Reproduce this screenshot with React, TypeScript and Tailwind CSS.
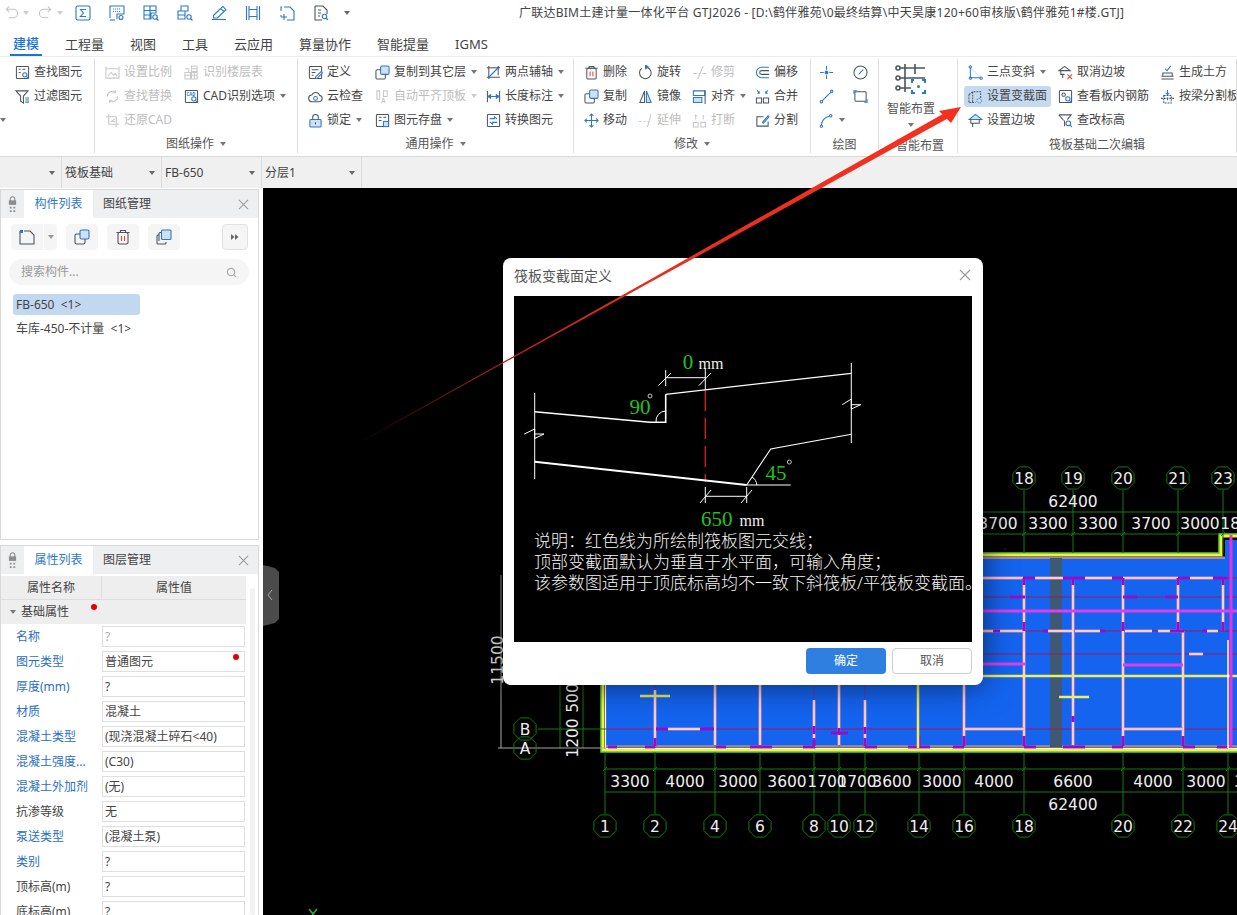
import type { ReactNode } from "react";

/* ── icons ── */
const BLUE = "#2b78c5";
const LIGHT = "#cfe0f5";
const RED = "#d9453a";

const icons: Record<string, ReactNode> = {
  find: (<><rect x="1.5" y="1.5" width="13" height="13" rx="1" /><path d="M4 4.5h2M8 4.5h3M4 8h2" /><circle cx="10.5" cy="10.5" r="2.3" stroke={BLUE} /><path d="M12.2 12.2l2.3 2.3" stroke={BLUE} /></>),
  filter: (<><path d="M1 2h13L9 7.5V15L6 13V7.5z" /><path d="M11 9.5h4M11 11.8h4M11 14h4" stroke={BLUE} /></>),
  scale: (<><path d="M1 4h14v10H1z" /><path d="M1 1.5v2M15 1.5v2M3 12l3.5-4 2.5 3 2-2 2 3" /></>),
  replace: (<><path d="M2.5 8a5.5 5.5 0 0 1 8.5-4.6M13.5 8A5.5 5.5 0 0 1 5 12.6" /><path d="M11 1v3H8M5 15v-3h3" /></>),
  restore: (<><path d="M4 1v11h11M1 4h11v11" /><path d="M11 6L7 9l4 0" /></>),
  layers: (<><path d="M8 1h6v6H8zM1 8h6v7H1zM8 8h6v7H8zM1 4h4v4" /><path d="M8 4h6M11 8v7M1 11h13" /></>),
  cad: (<><rect x="1.5" y="1.5" width="13" height="13" rx="1" /><text x="2.6" y="7" fontSize="4.6" fontWeight="700" fill={BLUE} stroke="none">CAD</text><circle cx="10.5" cy="10.5" r="2.3" stroke={BLUE} /><path d="M12.2 12.2l2.3 2.3" stroke={BLUE} /></>),
  define: (<><rect x="1.5" y="1.5" width="13" height="13" rx="1" /><path d="M4 5h7M4 8h4M4 11h2" /><path d="M8 13l6-6 1.5 1.5-6 6H8z" stroke={BLUE} fill="white" /></>),
  cloud: (<><path d="M4.5 13.5a3.5 3.5 0 0 1-.5-7 4.5 4.5 0 0 1 8.5.3 3.4 3.4 0 0 1-.5 6.7z" /><circle cx="8" cy="10" r="2" stroke={BLUE} /></>),
  lock: (<><path d="M5 7V4.5a3 3 0 0 1 6 0V7" /><rect x="2" y="7" width="12" height="8" rx="1" fill={LIGHT} stroke={BLUE} /><path d="M8 10v2" stroke="#444" /></>),
  copy: (<><rect x="6" y="1" width="9" height="9" rx="1.5" fill={LIGHT} stroke={BLUE} /><path d="M6 5H2.5A1.5 1.5 0 0 0 1 6.500V13.500A1.500 1.500 0 0 0 2.500 15H9.500A1.500 1.500 0 0 0 11 13.500V10" /></>),
  align2: (<><path d="M2 2h3v9H2zM9 2h4v6H9z" /><path d="M7 15l2-5 2 5M8 13.500h2" /></>),
  save: (<><rect x="1.500" y="1.500" width="13" height="13" rx="1" /><path d="M4 4.500h3M9 4.500h3M4 8h3" /><rect x="9" y="9" width="5.500" height="5.500" fill={LIGHT} stroke={BLUE} /></>),
  axis: (<><path d="M3 1v14M1 13h14M13 1v10" /><path d="M2 14L14 2" stroke={BLUE} strokeWidth="1.500" /><path d="M1 3h14" /></>),
  dim: (<><path d="M1.500 2v12M14.500 2v12" /><path d="M2 8h12M2 8l3-2v4zM14 8l-3-2v4z" stroke={BLUE} /></>),
  convert: (<><rect x="1.500" y="1.500" width="13" height="13" rx="1" /><path d="M4 6h5V4l3 2.500M12 10H7v2l-3-2.500" stroke={BLUE} /></>),
  del: (<><path d="M1.500 3.500h13M5.500 3.500V1.500h5v2" /><rect x="3" y="3.500" width="10" height="11.500" rx="1.500" /><path d="M6.500 7v5M9.500 7v5" stroke={RED} /></>),
  rotate: (<><path d="M9 2.300A6.200 6.200 0 1 1 4 3.500" /><path d="M8 0v4l3-2z" fill={BLUE} stroke={BLUE} /></>),
  trim: <path d="M1 9h4M7 9h2M11 9h4M12 1l-6 14" />,
  offset: (<><path d="M15 2.500H7a5.500 5.500 0 0 0 0 11h8" stroke={BLUE} /><path d="M15 6H7a2 2 0 0 0 0 4h8" /></>),
  mirror: (<><path d="M7 2L2 14.500h5z" /><path d="M9 2l5 12.500H9z" fill={LIGHT} stroke={BLUE} /></>),
  align: (<><path d="M1.500 2h12v5h-12z" stroke={BLUE} /><path d="M1.500 9h9v5.500h-9z" fill={LIGHT} stroke={BLUE} /><path d="M14 1v15" /></>),
  merge: (<><path d="M1.500 9.500h5.500v5.500H1.500zM9 9.500h5.500v5.500H9z" /><path d="M2.500 1.500l2 3M4.500 2.500v2h-2M13.500 1.500l-2 3M11.500 2.500v2h2" stroke={BLUE} /></>),
  move: <path stroke={BLUE} d="M8 1v14M1 8h14M6 3l2-2 2 2M6 13l2 2 2-2M3 6L1 8l2 2M13 6l2 2-2 2" />,
  extend: <path d="M1 9h3M6 9h2M10 9h2M14 1L10 15" />,
  breakIt: (<><path d="M1.500 10h5v5h-5zM9.500 10h5v5h-5zM4 2v5M12 2v5M3 3l1-1 1 1" /></>),
  split: (<><path d="M9 4H2v10h12V9" /><path d="M8 10l6-7 1 1-6 7z" stroke={BLUE} /></>),
  point: (<><path d="M8 1v4M8 11v4M1 8h4M11 8h4" stroke={BLUE} /><circle cx="8" cy="8" r="1.500" fill={BLUE} stroke={BLUE} /></>),
  gauge: (<><circle cx="8" cy="8" r="7" /><path d="M6 10l5-5" stroke={BLUE} /></>),
  line: (<><path d="M3 13L13 3" stroke={BLUE} /><circle cx="2.500" cy="13.500" r="1.300" stroke={BLUE} /><circle cx="13.500" cy="2.500" r="1.300" stroke={BLUE} /></>),
  rect: (<><rect x="2" y="3" width="12" height="10" rx="1" /><path d="M1 5V2h3M12 14h3v-3" stroke={BLUE} /></>),
  arc: (<><path d="M2.500 13A10 10 0 0 1 11 3.500" stroke={BLUE} /><circle cx="2.500" cy="14" r="1.300" stroke={BLUE} /><circle cx="12.500" cy="3" r="1.300" stroke={BLUE} /></>),
  three: (<><path d="M2.500 3v10.500H13" stroke={BLUE} /><path d="M3 3l10 10" stroke="#d5e4f5" /><circle cx="2.500" cy="2" r="1.200" stroke={BLUE} /><circle cx="2.500" cy="14" r="1.200" stroke={BLUE} /><circle cx="14" cy="14" r="1.200" stroke={BLUE} /></>),
  section: (<><path d="M1 6l4-3h8.500v7.500M1 6v8.500h7M5 3v11" strokeDasharray="2 1" /><circle cx="12" cy="12.500" r="2.500" stroke={BLUE} strokeDasharray="1 1" /></>),
  slope: (<><path d="M1 7l7-5.500L15 7z" fill={LIGHT} stroke={BLUE} /><path d="M3 7v4h9V7M5 11v4" /></>),
  cancel: (<><path d="M1 6l6-4.500L13 6z" /><path d="M3 6v4h4M5 10v4" /><path d="M10 10l5 5M15 10l-5 5" stroke={RED} /></>),
  rebar: (<><rect x="1.500" y="1.500" width="13" height="13" rx="1" /><circle cx="6" cy="6" r="1.800" /><circle cx="10.500" cy="10.500" r="2.300" stroke={BLUE} /><path d="M12.200 12.200l2.300 2.300" stroke={BLUE} /></>),
  elev: (<><path d="M1 2h13l-4 5M7 8v6M1 2l5 6" /><circle cx="11" cy="11" r="2.500" stroke={BLUE} /><path d="M13 13l2 2" stroke={BLUE} /></>),
  earth: (<><path d="M1.500 12h13M3 12V8.500h10V12M1.500 15h13" /><path d="M5.500 4l2 2 4-5" stroke={BLUE} /></>),
  cut: (<><path d="M1 10h14M4 7h8v8H4z" strokeDasharray="2 1" /><path d="M8 1v5M6 4l2 2 2-2M8 9v3" stroke={BLUE} /></>),
  sum: (<><rect x="1" y="1" width="14" height="14" rx="1.500" stroke={BLUE} /><path d="M11 4.500H5.500L8.500 8l-3 3.500H11" stroke={BLUE} /></>),
  gridKey: (<><path d="M1 13V1h14v8H8v5" stroke={BLUE} /><path d="M4 4h8M4 6.500h8" stroke={BLUE} strokeDasharray="1 1" /><circle cx="12" cy="12.500" r="2" stroke={BLUE} /><path d="M1 15h5" stroke={BLUE} /></>),
  gridFind: (<><path d="M1 1h12v7H8v6H1zM1 5.500h12M7 1v13M1 10h6" stroke={BLUE} /><circle cx="12" cy="12" r="2.200" stroke={BLUE} /><path d="M13.500 13.500l2 2" stroke={BLUE} /></>),
  gridDash: (<><path d="M4 1h7v5H8v8H1V6h3zM1 10h7M4 1v5h4" stroke={BLUE} /><circle cx="12" cy="12" r="2.200" stroke={BLUE} /><path d="M13.500 13.500l2 2" stroke={BLUE} /></>),
  pen: (<><path d="M1 14.500h14" stroke={BLUE} /><path d="M2.500 10.500l7-7 3.500 3-6.500 6.500H2.500z" stroke={BLUE} /><path d="M10 3l2-1.500L15 5l-2 1.500" stroke={BLUE} /></>),
  film: <path stroke={BLUE} d="M1.500 1v14M14.500 1v14M4 1v14M12 1v14M4 4.500h8M4 11.500h8" />,
  region: (<><path d="M5 2h6l4 4v9H8M2 6V2h1M2 10v2" stroke={BLUE} /><path d="M5 9v6M2 12h6" stroke={BLUE} /></>),
  reportFind: (<><path d="M2 1h8l4 4v4M2 1v14h7" /><path d="M5 5h3M5 8h3M5 11h2" /><circle cx="11.500" cy="11.500" r="2.200" stroke={BLUE} /><path d="M13 13l2 2" stroke={BLUE} /></>),
  newDoc: (<><path d="M5 2h6l4 4v9H1V2" /><path d="M1 1h3v3H1z" fill={BLUE} stroke="none" /></>),
  stack: (<><rect x="5.500" y="1" width="9.500" height="9.500" rx="1" fill={LIGHT} stroke={BLUE} /><path d="M5.500 3.500H4A1 1 0 0 0 3 4.500V12M3 6H2A1 1 0 0 0 1 7v7a1 1 0 0 0 1 1h7a1 1 0 0 0 1-1v-1" /></>),
  undo: <path d="M3 5.500h7a4.500 4.500 0 0 1 0 9H5M5.500 2.500L2.500 5.500l3 3" transform="translate(0 -1)" />,
  redo: <path d="M13 5.500H6a4.500 4.500 0 0 0 0 9h5M10.500 2.500l3 3-3 3" transform="translate(0 -1)" />,
};

function Ico({ name, tone = "text-[#4a5560]", size = "w-[15px] h-[15px]" }: { name: string; tone?: string; size?: string }) {
  return (
    <svg viewBox="0 0 16 16" fill="none" stroke="currentColor" strokeWidth={1.1} className={`${size} ${tone} shrink-0`} aria-hidden>
      {icons[name]}
    </svg>
  );
}

function Caret({ tone = "border-t-[#777]" }: { tone?: string }) {
  return <span className={`inline-block shrink-0 w-0 h-0 border-x-[3px] border-x-transparent border-t-[4px] ${tone}`} />;
}

function CloseX({ tone = "text-[#9a9a9a]", size = "w-[11px] h-[11px]" }: { tone?: string; size?: string }) {
  return (
    <svg viewBox="0 0 12 12" fill="none" stroke="currentColor" strokeWidth={1.1} className={`${size} ${tone}`} aria-hidden>
      <path d="M1 1l10 10M11 1L1 11" />
    </svg>
  );
}

/* ── ribbon data ── */
type Item = { label?: string; icon: string; off?: boolean; caret?: boolean; active?: boolean };
type Column = { width: string; items: Item[] };
type Group = { width: string; pad: string; title?: string; titleCaret?: boolean; titleNudge?: boolean; columns: Column[] };

const groups: Group[] = [
  {
    width: "w-[95px]",
    pad: "pl-[15px]",
    columns: [{ width: "w-[79px]", items: [{ label: "查找图元", icon: "find" }, { label: "过滤图元", icon: "filter" }] }],
  },
  {
    width: "w-[203px]",
    pad: "pl-[10px]",
    title: "图纸操作",
    titleCaret: true,
    columns: [
      { width: "w-[79px]", items: [{ label: "设置比例", icon: "scale", off: true }, { label: "查找替换", icon: "replace", off: true }, { label: "还原CAD", icon: "restore", off: true }] },
      { width: "w-[110px]", items: [{ label: "识别楼层表", icon: "layers", off: true }, { label: "CAD识别选项", icon: "cad", caret: true }] },
    ],
  },
  {
    width: "w-[276px]",
    pad: "pl-[10px]",
    title: "通用操作",
    titleCaret: true,
    columns: [
      { width: "w-[67px]", items: [{ label: "定义", icon: "define" }, { label: "云检查", icon: "cloud" }, { label: "锁定", icon: "lock", caret: true }] },
      { width: "w-[111px]", items: [{ label: "复制到其它层", icon: "copy", caret: true }, { label: "自动平齐顶板", icon: "align2", off: true, caret: true }, { label: "图元存盘", icon: "save", caret: true }] },
      { width: "w-[85px]", items: [{ label: "两点辅轴", icon: "axis", caret: true }, { label: "长度标注", icon: "dim", caret: true }, { label: "转换图元", icon: "convert" }] },
    ],
  },
  {
    width: "w-[237px]",
    pad: "pl-[10px]",
    title: "修改",
    titleCaret: true,
    columns: [
      { width: "w-[54px]", items: [{ label: "删除", icon: "del" }, { label: "复制", icon: "copy" }, { label: "移动", icon: "move" }] },
      { width: "w-[54px]", items: [{ label: "旋转", icon: "rotate" }, { label: "镜像", icon: "mirror" }, { label: "延伸", icon: "extend", off: true }] },
      { width: "w-[63px]", items: [{ label: "修剪", icon: "trim", off: true }, { label: "对齐", icon: "align", caret: true }, { label: "打断", icon: "breakIt", off: true }] },
      { width: "w-[54px]", items: [{ label: "偏移", icon: "offset" }, { label: "合并", icon: "merge" }, { label: "分割", icon: "split" }] },
    ],
  },
  {
    width: "w-[68px]",
    pad: "pl-[8px]",
    title: "绘图",
    titleNudge: true,
    columns: [
      { width: "w-[34px]", items: [{ icon: "point" }, { icon: "line" }, { icon: "arc", caret: true }] },
      { width: "w-[24px]", items: [{ icon: "gauge" }, { icon: "rect" }] },
    ],
  },
];

const slabGroup: Group = {
  width: "w-[279px]",
  pad: "pl-[10px]",
  title: "筏板基础二次编辑",
  titleNudge: true,
  columns: [
    { width: "w-[90px]", items: [{ label: "三点变斜", icon: "three", caret: true }, { label: "设置变截面", icon: "section", active: true }, { label: "设置边坡", icon: "slope" }] },
    { width: "w-[102px]", items: [{ label: "取消边坡", icon: "cancel" }, { label: "查看板内钢筋", icon: "rebar" }, { label: "查改标高", icon: "elev" }] },
    { width: "w-[90px]", items: [{ label: "生成土方", icon: "earth" }, { label: "按梁分割板", icon: "cut" }] },
  ],
};

function RibbonItem({ item }: { item: Item }) {
  const color = item.off ? "text-[#bdbdbd]" : "text-[#444]";
  return (
    <div className="h-6 flex items-center">
      <div className={`flex items-center gap-1 whitespace-nowrap h-[21px] ${item.active ? "bg-[#c5daf0] rounded-[3px] -mx-1 px-1" : ""}`}>
        <Ico name={item.icon} tone={item.off ? "text-[#c8c8c8]" : "text-[#4a5560]"} />
        {item.label && <span className={`text-xs leading-none ${color}`}>{item.label}</span>}
        {item.caret && <span className="ml-[1px] flex"><Caret tone={item.off ? "border-t-[#ccc]" : "border-t-[#777]"} /></span>}
      </div>
    </div>
  );
}

function GroupTitle({ group }: { group: Group }) {
  return (
    <div className={`h-[26px] shrink-0 flex items-center justify-center gap-[6px] text-xs text-[#555] ${group.titleNudge ? "pt-[2px]" : ""}`}>
      <span>{group.title}</span>
      {group.titleCaret && <Caret />}
    </div>
  );
}

function RibbonGroup({ group }: { group: Group }) {
  return (
    <div className={`${group.width} shrink-0 h-[94px] my-[2px] border-r border-[#dedede] flex flex-col overflow-hidden`}>
      <div className={`flex h-[72px] shrink-0 pt-px ${group.pad}`}>
        {group.columns.map((col, i) => (
          <div key={i} className={`${col.width} shrink-0`}>
            {col.items.map((item, j) => (
              <RibbonItem key={j} item={item} />
            ))}
          </div>
        ))}
      </div>
      {group.title && <GroupTitle group={group} />}
    </div>
  );
}

/* ── side panels ── */
const quickIcons = ["sum", "gridKey", "gridFind", "gridDash", "pen", "film", "region", "reportFind"];
const tabs = ["建模", "工程量", "视图", "工具", "云应用", "算量协作", "智能提量", "IGMS"];
const pickers = [
  { label: "", width: "w-[62px]" },
  { label: "筏板基础", width: "w-[100px]" },
  { label: "FB-650", width: "w-[100px]" },
  { label: "分层1", width: "w-[100px]" },
];

const props: { name: string; value: string; blue?: boolean; dot?: boolean; faint?: boolean }[] = [
  { name: "名称", value: "?", blue: true, faint: true },
  { name: "图元类型", value: "普通图元", blue: true, dot: true },
  { name: "厚度(mm)", value: "?", blue: true },
  { name: "材质", value: "混凝土", blue: true },
  { name: "混凝土类型", value: "(现浇混凝土碎石<40)", blue: true },
  { name: "混凝土强度...", value: "(C30)", blue: true },
  { name: "混凝土外加剂", value: "(无)", blue: true },
  { name: "抗渗等级", value: "无" },
  { name: "泵送类型", value: "(混凝土泵)", blue: true },
  { name: "类别", value: "?", blue: true },
  { name: "顶标高(m)", value: "?" },
  { name: "底标高(m)", value: "?" },
];

function PanelHeader({ active, other }: { active: string; other: string }) {
  return (
    <div className="h-[28px] shrink-0 bg-[#eeeff1] flex items-stretch text-xs">
      <div className="w-[23px] flex flex-col items-center justify-center gap-px">
        <svg viewBox="0 0 10 18" className="w-[9px] h-[18px]" aria-hidden>
          <path d="M2.500 6V3.500a2.500 2.500 0 0 1 5 0V6" fill="none" stroke="#8c8c8c" strokeWidth="1.200" />
          <rect x="1" y="5" width="8" height="5" fill="#8c8c8c" />
          <path d="M2 12h2v2H2zM6 12h2v2H6zM2 16h2v2H2zM6 16h2v2H6z" fill="#8c8c8c" />
        </svg>
      </div>
      <div className="w-[69px] bg-white text-[#2b78c5] flex items-center justify-center">{active}</div>
      <div className="ml-[10px] text-[#444] flex items-center">{other}</div>
      <div className="ml-auto mr-[9px] flex items-center">
        <CloseX />
      </div>
    </div>
  );
}

function ComponentPanel() {
  return (
    <section className="h-[351px] w-[259px] shrink-0 border-x border-y border-[#d9d9d9] flex flex-col overflow-hidden">
      <PanelHeader active="构件列表" other="图纸管理" />
      <div className="flex items-center h-[26px] mt-[6px] ml-[10px]">
        <div className="flex">
          <div className="w-[32px] h-[26px] bg-[#f5f5f5] rounded-l-[4px] flex items-center justify-center">
            <Ico name="newDoc" size="w-[16px] h-[16px]" />
          </div>
          <div className="w-[13px] ml-px h-[26px] bg-[#f5f5f5] rounded-r-[4px] flex items-center justify-center">
            <Caret tone="border-t-[#999]" />
          </div>
        </div>
        {["copy", "del", "stack"].map((n, i) => (
          <div key={i} className="w-[32px] h-[26px] ml-[9px] bg-[#f5f5f5] rounded-[4px] flex items-center justify-center">
            <Ico name={n} size="w-[16px] h-[16px]" />
          </div>
        ))}
        <div className="w-[26px] h-[26px] ml-[42px] bg-[#f5f5f5] border border-[#e2e2e2] rounded-[4px] flex items-center justify-center text-[#666]">
          <svg viewBox="0 0 8 6" className="w-[8px] h-[6px]" fill="currentColor" aria-hidden><path d="M0 0l3.500 3L0 6zM4 0l3.500 3L4 6z" /></svg>
        </div>
      </div>
      <div className="mt-[9px] ml-[8px] mr-[9px] h-[26px] rounded-full bg-[#f5f5f5] flex items-center px-3 text-xs text-[#9a9a9a]">
        <span>搜索构件...</span>
        <svg viewBox="0 0 12 12" className="w-[11px] h-[11px] ml-auto" fill="none" stroke="#a8a8a8" strokeWidth="1.200" aria-hidden>
          <circle cx="5.500" cy="5.500" r="4" /><path d="M8.500 8.500l2.500 2.500" />
        </svg>
      </div>
      <div className="mt-[9px] ml-[12px] text-xs text-[#444]">
        <div className="w-[127px] h-[21px] bg-[#c2d8f0] rounded-[3px] flex items-center pl-[3px]">FB-650&nbsp; &lt;1&gt;</div>
        <div className="h-[24px] mt-[2px] flex items-center pl-[3px]">车库-450-不计量&nbsp; &lt;1&gt;</div>
      </div>
    </section>
  );
}

function PropertyPanel() {
  return (
    <section className="mt-[5px] flex-1 min-h-0 w-[259px] border-x border-t border-[#d9d9d9] flex flex-col overflow-hidden relative">
      <PanelHeader active="属性列表" other="图层管理" />
      <div className="absolute right-[3px] top-[42px] bottom-0 w-[5px] bg-[#f3f3f3] rounded-full" />
      <div className="mt-[2px] w-[245px] text-xs">
        <div className="flex h-[24px] bg-[#eeeeee] text-[#444] border-b border-[#ddd]">
          <div className="w-[101px] border-r border-[#ddd] flex items-center justify-center">属性名称</div>
          <div className="flex-1 flex items-center justify-center">属性值</div>
        </div>
        <div className="relative h-[24px] bg-[#eeeeee] flex items-center text-[#444]">
          <span className="ml-[9px] mr-[5px] flex"><Caret /></span>
          <span>基础属性</span>
          <span className="absolute left-[90px] top-[4px] w-[6px] h-[6px] rounded-full bg-[#e30000]" />
        </div>
        <div>
          {props.map((p) => (
            <div key={p.name} className="flex h-[25px] items-center">
              <div className={`w-[101px] pl-[15px] whitespace-nowrap ${p.blue ? "text-[#2b6fc0]" : "text-[#444]"}`}>{p.name}</div>
              <div className={`relative w-[143px] h-[21px] border border-[#dfdfdf] flex items-center pl-[2px] ${p.faint ? "text-[#aaa]" : "text-[#444]"}`}>
                {p.value}
                {p.dot && <span className="absolute right-[5px] top-[2px] w-[6px] h-[6px] rounded-full bg-[#e30000]" />}
              </div>
            </div>
          ))}
        </div>
      </div>
    </section>
  );
}

/* ── CAD drawing ── */
const cadFont = "'DejaVu Sans', sans-serif";
const axisGreen = "#127a12";
const darkRed = "#a3175a";
const purple = "#9010c8";
const magenta = "#e03cf0";

const topBubbles: [string, number][] = [["18", 1024], ["19", 1073], ["20", 1123], ["21", 1178], ["23", 1223]];
const bottomBubbles: [string, number][] = [
  ["1", 605], ["2", 655], ["4", 715], ["6", 760], ["8", 814], ["10", 839], ["12", 865],
  ["14", 919], ["16", 964], ["18", 1024], ["20", 1123], ["22", 1183], ["24", 1228],
];
const topDims: [string, number][] = [["3700", 998], ["3300", 1048], ["3300", 1098], ["3700", 1151], ["3000", 1200], ["1800", 1240]];
const bottomDims: [string, number][] = [
  ["3300", 630], ["4000", 685], ["3000", 738], ["3600", 787], ["1700", 827], ["1700", 857], ["3600", 892],
  ["3000", 942], ["4000", 994], ["6600", 1073], ["4000", 1153], ["3000", 1206], ["3300", 1254],
];

// white members with a pink edge: [x1, y1, x2, y2]
const members: number[][] = [
  [655, 690, 655, 745], [715, 685, 715, 745], [760, 685, 760, 745], [814, 700, 814, 740], [839, 685, 839, 745], [865, 700, 865, 745],
  [964, 685, 964, 745], [1024, 578, 1024, 745], [1073, 578, 1073, 745], [1123, 578, 1123, 745], [1178, 578, 1178, 631],
  [1183, 631, 1183, 745], [1223, 578, 1223, 631],
  [668, 729, 700, 729], [965, 729, 1024, 729], [1124, 729, 1183, 729],
  [983, 578, 1023, 578], [1035, 578, 1063, 578], [1085, 578, 1112, 578], [1123, 578, 1178, 578], [1190, 578, 1213, 578],
  [983, 631, 1024, 631], [1048, 631, 1072, 631], [1075, 631, 1100, 631], [1125, 631, 1152, 631], [1158, 631, 1183, 631], [1207, 631, 1218, 631],
  [1189, 654, 1203, 654],
];

// purple rebar blocks: [x1, y1, x2, y2]
const blocks: number[][] = [
  [608, 747, 617, 747], [645, 747, 655, 747], [716, 747, 726, 747], [750, 747, 772, 747], [803, 747, 815, 747], [865, 747, 877, 747],
  [908, 747, 930, 747], [953, 747, 964, 747], [1024, 747, 1036, 747], [1063, 747, 1085, 747], [1112, 747, 1123, 747], [1183, 747, 1195, 747], [1217, 747, 1228, 747],
  [656, 729, 668, 729], [700, 729, 714, 729], [831, 733, 848, 733],
  [1023, 578, 1035, 578], [1063, 578, 1085, 578], [1112, 578, 1123, 578], [1178, 578, 1190, 578], [1213, 578, 1227, 578],
  [1010, 597, 1025, 597], [1123, 597, 1137, 597], [1165, 597, 1178, 597],
  [993, 631, 1000, 631], [1043, 631, 1048, 631], [1100, 631, 1105, 631], [1170, 631, 1184, 631], [1202, 631, 1207, 631],
  [1024, 578, 1024, 585], [1073, 578, 1073, 585], [1123, 578, 1123, 585], [1178, 578, 1178, 585], [1223, 578, 1223, 585],
  [1024, 622, 1024, 631], [1123, 622, 1123, 631], [1178, 622, 1178, 631], [1223, 622, 1223, 631],
  [655, 738, 655, 746], [814, 726, 814, 734], [814, 738, 814, 746], [839, 728, 839, 735], [865, 727, 865, 734], [865, 738, 865, 746],
  [919, 736, 919, 746], [964, 736, 964, 746], [1024, 736, 1024, 746], [1073, 716, 1073, 722], [1123, 736, 1123, 746], [1183, 736, 1183, 746],
];

function octagon(cx: number, cy: number, r: number) {
  const pts: string[] = [];
  for (let i = 0; i < 8; i++) {
    const a = (Math.PI / 4) * i + Math.PI / 8;
    pts.push(`${cx + r * Math.cos(a)},${cy + r * Math.sin(a)}`);
  }
  return pts.join(" ");
}

function Bubble({ label, x, y }: { label: string; x: number; y: number }) {
  return (
    <g>
      <polygon points={octagon(x, y, 12)} fill="none" stroke={axisGreen} />
      <text x={x} y={y + 6} textAnchor="middle" fontSize="15.500" fill="#eee" fontFamily={cadFont}>{label}</text>
    </g>
  );
}

function DimText({ label, x, y }: { label: string; x: number; y: number }) {
  return <text x={x} y={y} textAnchor="middle" fontSize="15.500" fill="#eee" fontFamily={cadFont}>{label}</text>;
}

function CadDrawing() {
  return (
    <svg viewBox="263 188 974 727" className="absolute inset-0 w-full h-full" aria-hidden>
      {/* collapse handle */}
      <path d="M263 565l12 3 4 4v47l-4 4-12 3z" fill="#4b4b4b" />
      <path d="M272 590l-4 5 4 5" fill="none" stroke="#a8a8a8" />

      {/* slab fill and outline */}
      <path d="M606 558H1225V540H1237V746H606z" fill="#1464f0" />
      <path d="M601 685V752H1237M600 553H1219V534H1237" fill="none" stroke="#45d945" strokeWidth="1.500" />
      <path d="M603 685V750H1237M600 555H1221V536H1237" fill="none" stroke="#f2f23c" strokeWidth="3" />
      <path d="M605.500 685V748.500H1237" fill="none" stroke="#ffffff" strokeWidth="1.200" />
      <path d="M606 746.500H1237M983 557.800H1225" fill="none" stroke="#a58a94" strokeWidth="2.500" />
      <rect x="1050" y="558" width="12" height="189" fill="#3f5873" />

      {/* dark red grid */}
      {[578, 597, 631, 654, 729].map((y) => (
        <path key={y} d={`M606 ${y}H1237`} stroke={darkRed} strokeWidth="1" />
      ))}
      {[655, 715, 760, 814, 839, 865, 919, 964].map((x) => (
        <path key={x} d={`M${x} 685V747`} stroke={darkRed} strokeOpacity=".5" strokeWidth="1" />
      ))}

      {/* members */}
      {members.map((m, i) => (
        <g key={i}>
          <line x1={m[0]} y1={m[1]} x2={m[2]} y2={m[3]} stroke="#e58aa8" strokeWidth="3" />
          <line x1={m[0]} y1={m[1]} x2={m[2]} y2={m[3]} stroke="#ffffff" strokeWidth="1.200" />
        </g>
      ))}
      {blocks.map((m, i) => (
        <line key={i} x1={m[0]} y1={m[1]} x2={m[2]} y2={m[3]} stroke={purple} strokeWidth="3" />
      ))}
      <path d="M983 611H1237M983 664H1025M1123 665H1183" stroke={magenta} strokeWidth="3" />
      <path d="M983 676H1237M918 685V748M640 696H670M1059 697H1089" stroke="#eef058" strokeWidth="2.500" />
      <path d="M1228 640V748" stroke="#ffffff" strokeWidth="1.500" />
      <path d="M1231 535V748" stroke="#f02ce0" strokeWidth="3" />
      <circle cx="1005" cy="549" r="1.500" fill="#111" />

      {/* axes */}
      {topBubbles.map(([label, x]) => (
        <g key={label}>
          <path d={`M${x} 490V553`} stroke={axisGreen} />
          <Bubble label={label} x={x} y={478} />
        </g>
      ))}
      {bottomBubbles.map(([label, x]) => (
        <g key={label}>
          <path d={`M${x} 752V814`} stroke={axisGreen} />
          <Bubble label={label} x={x} y={826} />
          <path d={`M${x - 2} 771l4-4`} stroke={axisGreen} />
        </g>
      ))}
      <path d="M983 512H1237M983 534H1219M605 769H1237M605 792H1237" stroke={axisGreen} />
      {topBubbles.map(([label, x]) => (
        <path key={label} d={`M${x - 2} 536l4-4`} stroke={axisGreen} />
      ))}
      {topDims.map(([label, x], i) => <DimText key={i} label={label} x={x} y={529} />)}
      {bottomDims.map(([label, x], i) => <DimText key={i} label={label} x={x} y={787} />)}
      <DimText label="62400" x={1073} y={507} />
      <DimText label="62400" x={1073} y={810} />

      {/* left side dims */}
      <path d="M538 729H606M560 685V748M583 685V748" stroke={axisGreen} fill="none" />
      <path d="M501 575V748M498 748H606" stroke="#a8a8a8" fill="none" />
      <Bubble label="B" x={525} y={729} />
      <Bubble label="A" x={525} y={748} />
      <text transform="translate(578 738) rotate(-90)" textAnchor="middle" fontSize="15.500" fill="#eee" fontFamily={cadFont}>1200</text>
      <text transform="translate(578 698) rotate(-90)" textAnchor="middle" fontSize="15.500" fill="#eee" fontFamily={cadFont}>500</text>
      <text transform="translate(503 660) rotate(-90)" textAnchor="middle" fontSize="15.500" fill="#eee" fontFamily={cadFont}>11500</text>

      {/* origin mark */}
      <path d="M309 909l4 5 4-5M313 914v1" fill="none" stroke="#2fae2f" strokeWidth="1.600" />
    </svg>
  );
}

/* ── dialog ── */
const serif = "'Liberation Serif', serif";

function SectionDiagram() {
  return (
    <svg viewBox="514 296 458 234" className="block w-[458px] h-[234px]" fill="none" stroke="#ffffff" aria-hidden>
      <path d="M705.300 390V482" stroke="#c82020" strokeWidth="1.400" strokeDasharray="21 7" />
      <path d="M665.700 394.300L851.300 373.300" strokeWidth="1.300" />
      <path d="M534.700 411.700L650 422.300H665.700V394.300" strokeWidth="1.600" />
      <path d="M534.700 461.700L746.700 485" strokeWidth="1.900" />
      <path d="M746.700 485L770.700 449L851.300 434.300" strokeWidth="1.100" />
      <path d="M746.700 485H790.700" strokeWidth="1" />
      <path d="M534.700 393V479M851.300 363V443" strokeWidth="1" />
      <path d="M524.300 434L534.700 429V438.500L544 434H534.700" strokeWidth="1" />
      <path d="M842.300 404.700L851.300 399V409L860.700 404.700H851.300" strokeWidth="1" />
      <path d="M665.700 377.700H705.300M665.700 370V386M705.300 368V390M658.500 385.500L671 373M699 385.500L711 373" strokeWidth="1" />
      <path d="M705.300 496.300H746.700M705.300 487V503M746.700 487V503M700 503L711 490M741 503L752 490" strokeWidth="1" />
      <path d="M656 422a10 10 0 0 1 9.700-11M756.800 485a10 10 0 0 0-4.800-8" strokeWidth="1" />
      <circle cx="650" cy="396" r="2" stroke="#c8c8c8" strokeWidth="1" />
      <circle cx="789.300" cy="462" r="2" stroke="#c8c8c8" strokeWidth="1" />
      <g fontFamily={serif} fontSize="21" fill="#21c121" stroke="none">
        <text x="688" y="369" textAnchor="middle">0</text>
        <text x="640" y="414" textAnchor="middle">90</text>
        <text x="776" y="480" textAnchor="middle">45</text>
        <text x="716.700" y="526" textAnchor="middle">650</text>
      </g>
      <g fontFamily={serif} fontSize="16" fill="#f0f0f0" stroke="none">
        <text x="711" y="369" textAnchor="middle">mm</text>
        <text x="752" y="526" textAnchor="middle">mm</text>
      </g>
    </svg>
  );
}

function SectionDialog() {
  return (
    <div className="absolute left-[240px] top-[70px] w-[480px] h-[427px] bg-white rounded-lg shadow-[0_0_32px_rgba(0,0,0,0.6)] flex flex-col px-[11px]">
      <div className="h-[38px] shrink-0 flex items-center justify-between pr-[1px] pb-[4px]">
        <span className="text-[14px] text-[#555]">筏板变截面定义</span>
        <CloseX size="w-[12px] h-[12px]" />
      </div>
      <div className="w-[458px] h-[346px] bg-black text-[#f4f4f4] text-[17px] leading-[21px] font-light overflow-hidden whitespace-nowrap">
        <SectionDiagram />
        <p className="pl-[20px]">说明：红色线为所绘制筏板图元交线；</p>
        <p className="pl-[20px]">顶部变截面默认为垂直于水平面，可输入角度；</p>
        <p className="pl-[20px]">该参数图适用于顶底标高均不一致下斜筏板/平筏板变截面。</p>
      </div>
      <div className="mt-[6px] flex justify-end gap-[6px] text-xs">
        <button className="w-[80px] h-[26px] rounded-[4px] bg-[#2e7fe0] text-white">确定</button>
        <button className="w-[80px] h-[26px] rounded-[4px] bg-white border border-[#cfcfcf] text-[#555]">取消</button>
      </div>
    </div>
  );
}

function RedArrow() {
  return (
    <svg viewBox="0 0 1237 915" className="absolute inset-0 w-full h-full pointer-events-none" aria-hidden>
      <defs>
        <linearGradient id="arrowFade" gradientUnits="userSpaceOnUse" x1="355" y1="445" x2="950" y2="115">
          <stop offset="0" stopColor="#7a1212" />
          <stop offset=".25" stopColor="#b01e1a" />
          <stop offset=".5" stopColor="#e5301f" />
          <stop offset="1" stopColor="#f5301f" />
        </linearGradient>
      </defs>
      <path d="M355 445L650.700 282.100L948.500 118L945.500 112.500L649.300 279.900z" fill="url(#arrowFade)" />
      <path d="M939 111L961 107L951 123z" fill="#f5301f" />
    </svg>
  );
}

/* ── page ── */
export default function App() {
  return (
    <div className="relative w-[1237px] h-[915px] overflow-hidden bg-white flex flex-col font-['Noto_Sans','Noto_Sans_CJK_SC',sans-serif] text-[#444]">
      {/* title row */}
      <div className="h-[28px] shrink-0 flex items-center pb-[3px]">
        <div className="flex items-center pl-[4px] w-[351px]">
          <Ico name="undo" tone="text-[#c4c4c4]" />
          <span className="ml-[4px] flex"><Caret tone="border-t-[#ccc]" /></span>
          <span className="ml-[9px] flex"><Ico name="redo" tone="text-[#c4c4c4]" /></span>
          <span className="ml-[4px] flex"><Caret tone="border-t-[#ccc]" /></span>
          <div className="ml-[12px] flex gap-[18px]">
            {quickIcons.map((n) => (
              <Ico key={n} name={n} size="w-[16px] h-[16px]" tone="text-[#4a5560]" />
            ))}
          </div>
          <span className="ml-[15px] flex"><Caret tone="border-t-[#666]" /></span>
        </div>
        <div className="ml-[168px] text-xs tracking-[0.25px] text-[#444] whitespace-nowrap">
          广联达BIM土建计量一体化平台 GTJ2026 - [D:\鹤伴雅苑\0最终结算\中天昊康120+60审核版\鹤伴雅苑1#楼.GTJ]
        </div>
      </div>

      {/* tabs */}
      <div className="h-[29px] shrink-0 flex pl-[13px] gap-[26px] border-b border-[#ececec] text-[13px] text-[#444]">
        {tabs.map((t, i) => (
          <div
            key={t}
            className={`flex items-center pt-[5px] ${i === 0 ? "-mx-[3px] px-[3px] border-b-[2px] border-[#1a73d9] text-[#1a73d9] font-medium" : ""}`}
          >
            {t}
          </div>
        ))}
      </div>

      {/* ribbon */}
      <div className="h-[100px] shrink-0 flex overflow-hidden relative border-b border-[#d9d9d9]">
        <span className="absolute left-0 top-[61px] flex"><Caret /></span>
        {groups.map((g, i) => (
          <RibbonGroup key={i} group={g} />
        ))}
        {/* smart layout */}
        <div className="w-[79px] shrink-0 h-[94px] my-[2px] border-r border-[#dedede] text-xs text-[#555]">
          <div className="w-[64px] flex flex-col items-center">
            <svg viewBox="0 0 32 32" className="w-[32px] h-[32px] mt-[4px]" fill="none" stroke="#4a5560" strokeWidth="1.600" aria-hidden>
              <path d="M3 5h27M3 15h27M3 25h13M10 1v28M20 1v10" />
              <circle cx="3" cy="5" r="2" fill="white" />
              <circle cx="3" cy="15" r="2" fill="white" />
              <circle cx="3" cy="25" r="2" fill="white" />
              <path d="M19 17h-2v3M27 17h3v3M17 27v3h3M30 27v3h-3" stroke="#2b78c5" strokeWidth="2" />
              <circle cx="23.500" cy="23.500" r="1.500" fill="#2b78c5" stroke="none" />
            </svg>
            <div className="mt-[5px] leading-[18px]">智能布置</div>
            <div className="mt-[5px] h-[8px] flex"><Caret /></div>
          </div>
          <div className="mt-[6px] pl-[17px] leading-[18px]">智能布置</div>
        </div>
        <RibbonGroup group={{ ...slabGroup }} />
      </div>

      {/* pickers */}
      <div className="h-[31px] shrink-0 bg-[#f0f0f0] flex text-xs text-[#444]">
        {pickers.map((p) => (
          <div key={p.label} className={`${p.width} pl-[3px] pr-[6px] border-r border-[#dcdcdc] flex items-center justify-between`}>
            <span>{p.label}</span>
            <Caret tone="border-t-[#666]" />
          </div>
        ))}
      </div>

      {/* workspace */}
      <div className="flex-1 min-h-0 flex">
        <div className="w-[263px] shrink-0 bg-white pt-px flex flex-col">
          <ComponentPanel />
          <PropertyPanel />
        </div>
        <main className="flex-1 relative bg-black overflow-hidden">
          <CadDrawing />
          <SectionDialog />
        </main>
      </div>

      <RedArrow />
    </div>
  );
}
